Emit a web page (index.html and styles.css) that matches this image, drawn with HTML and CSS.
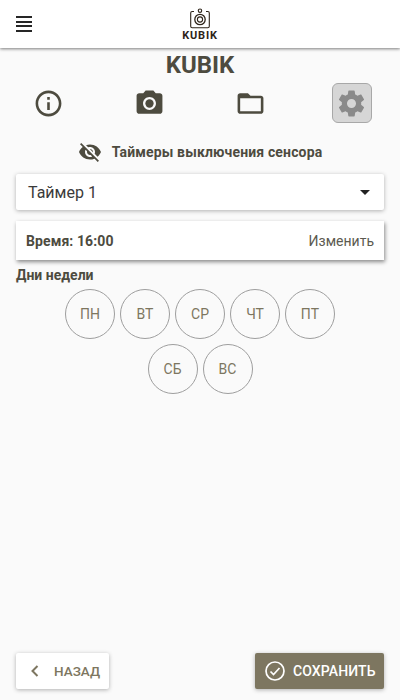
FILE: index.html
```html
<!DOCTYPE html>
<html lang="ru">
<head>
    <title>KUBIK</title>
    <meta charset="UTF-8">
    <meta name="viewport" content="width=device-width, initial-scale=1.0">
    <link rel="stylesheet" href="styles.css">
</head>
<body>
    <div class="header">
        <div class="menu-button">
            <span></span><span></span><span></span><span></span>
        </div>
        <div class="logo">
            <svg viewBox="0 0 20 21" class="logo-icon">
                <path d="M4 3.5H2.2Q.7 3.5.7 5v13.3q0 1.5 1.5 1.5h15.6q1.5 0 1.5-1.5V5q0-1.500-1.500-1.500H16" fill="none" stroke="#2e2419" stroke-width="1.1"/>
                <circle cx="10" cy="11.500" r="5.200" fill="none" stroke="#2e2419" stroke-width="1.300"/>
                <circle cx="10" cy="11.500" r="2.600" fill="none" stroke="#2e2419" stroke-width="1.100"/>
                <circle cx="10" cy="2.700" r="1.700" fill="none" stroke="#2e2419" stroke-width="1.100"/>
            </svg>
            <div class="logo-text">KUBIK</div>
        </div>
    </div>

    <div class="content">
        <div class="title">KUBIK</div>

        <div class="tabs">
            <div class="tab">
                <svg viewBox="0 0 24 24" class="tab-icon"><path d="M11 7h2v2h-2zm0 4h2v6h-2zm1-9C6.480 2 2 6.480 2 12s4.480 10 10 10 10-4.480 10-10S17.520 2 12 2zm0 18c-4.410 0-8-3.590-8-8s3.590-8 8-8 8 3.590 8 8-3.590 8-8 8z"/></svg>
            </div>
            <div class="tab">
                <svg viewBox="0 0 24 24" class="tab-icon"><circle cx="12" cy="12" r="3.200"/><path d="M9 2L7.170 4H4c-1.100 0-2 .9-2 2v12c0 1.100.9 2 2 2h16c1.100 0 2-.9 2-2V6c0-1.100-.9-2-2-2h-3.170L15 2H9zm3 15c-2.760 0-5-2.240-5-5s2.240-5 5-5 5 2.240 5 5-2.240 5-5 5z"/></svg>
            </div>
            <div class="tab">
                <svg viewBox="0 0 24 24" class="tab-icon"><path d="M20 6h-8l-2-2H4c-1.100 0-1.990.9-1.990 2L2 18c0 1.100.9 2 2 2h16c1.100 0 2-.9 2-2V8c0-1.100-.9-2-2-2zm0 12H4V8h16v10z"/></svg>
            </div>
            <div class="tab active">
                <svg viewBox="0 0 24 24" class="tab-icon"><path d="M19.430 12.980c.04-.32.07-.64.07-.98s-.03-.66-.07-.98l2.110-1.650c.19-.15.24-.42.12-.64l-2-3.460c-.12-.22-.39-.3-.61-.22l-2.490 1c-.52-.4-1.080-.73-1.690-.98l-.38-2.650C14.460 2.180 14.250 2 14 2h-4c-.25 0-.46.18-.49.42l-.38 2.650c-.61.25-1.170.59-1.690.98l-2.490-1c-.23-.09-.49 0-.61.22l-2 3.460c-.13.22-.07.49.12.64l2.110 1.650c-.04.32-.07.65-.07.98s.03.66.07.98l-2.110 1.650c-.19.15-.24.42-.12.64l2 3.460c.12.22.39.3.61.22l2.490-1c.52.4 1.080.73 1.690.98l.38 2.650c.03.24.24.42.49.42h4c.25 0 .46-.18.49-.42l.38-2.650c.61-.25 1.170-.59 1.690-.98l2.490 1c.23.09.49 0 .61-.22l2-3.460c.12-.22.07-.49-.12-.64l-2.110-1.650zM12 15.500c-1.930 0-3.500-1.570-3.500-3.500s1.570-3.500 3.500-3.500 3.500 1.570 3.500 3.500-1.570 3.500-3.500 3.500z"/></svg>
            </div>
        </div>

        <div class="section-title">
            <svg viewBox="0 0 24 24" class="section-icon"><path d="M12 7c2.760 0 5 2.240 5 5 0 .65-.13 1.260-.36 1.830l2.920 2.920c1.510-1.260 2.700-2.890 3.430-4.750-1.730-4.390-6-7.500-11-7.500-1.400 0-2.740.25-3.980.7l2.160 2.160C10.740 7.130 11.350 7 12 7zM2 4.270l2.280 2.280.46.46C3.080 8.300 1.780 10.020 1 12c1.730 4.390 6 7.500 11 7.500 1.550 0 3.030-.3 4.380-.84l.42.42L19.730 22 21 20.730 3.270 3 2 4.270zM7.530 9.800l1.550 1.550c-.05.21-.08.43-.08.65 0 1.660 1.340 3 3 3 .22 0 .44-.03.65-.08l1.550 1.550c-.67.33-1.410.53-2.200.53-2.760 0-5-2.240-5-5 0-.79.2-1.530.53-2.200zm4.310-.78l3.150 3.150.02-.16c0-1.660-1.340-3-3-3l-.17.01z"/></svg>
            <span>Таймеры выключения сенсора</span>
        </div>

        <div class="select">
            <span>Таймер 1</span>
            <span class="select-arrow"></span>
        </div>

        <div class="time-card">
            <span class="time-value">Время: 16:00</span>
            <span class="time-edit">Изменить</span>
        </div>

        <div class="days-label">Дни недели</div>
        <div class="days">
            <div class="day">ПН</div>
            <div class="day">ВТ</div>
            <div class="day">СР</div>
            <div class="day">ЧТ</div>
            <div class="day">ПТ</div>
            <div class="day">СБ</div>
            <div class="day">ВС</div>
        </div>

        <div class="footer">
            <div class="btn btn-back">
                <svg viewBox="0 0 10 14" class="back-icon"><path d="M7.500 2L2.500 7l5 5" fill="none" stroke="#7d7660" stroke-width="2"/></svg>
                <span>НАЗАД</span>
            </div>
            <div class="btn btn-save">
                <svg viewBox="0 0 20 20" class="save-icon">
                    <circle cx="10" cy="10" r="9" fill="none" stroke="#ffffff" stroke-width="1.700"/>
                    <path d="M5.500 10.500l3 3 6-6.500" fill="none" stroke="#ffffff" stroke-width="1.700"/>
                </svg>
                <span>СОХРАНИТЬ</span>
            </div>
        </div>
    </div>
</body>
</html>
```

FILE: styles.css
```css
html, body {
    height: 100%;
    margin: 0;
    font-family: Roboto, "Liberation Sans", sans-serif;
    background-color: #fafafa;
    color: #4d4b3f;
    overflow: hidden;
}
body {
    display: flex;
    flex-direction: column;
}
.header {
    background-color: #ffffff;
    height: 48px;
    flex-shrink: 0;
    display: flex;
    align-items: center;
    justify-content: center;
    position: relative;
    box-shadow: 0 1px 3px rgba(0, 0, 0, 0.5);
}
.menu-button {
    position: absolute;
    left: 16px;
    top: 16px;
    width: 16px;
    height: 16px;
    display: flex;
    flex-direction: column;
    justify-content: space-between;
}
.menu-button span {
    height: 2px;
    background-color: #262626;
}
.logo {
    display: flex;
    flex-direction: column;
    align-items: center;
    padding-top: 1px;
}
.logo-icon {
    width: 20px;
    height: 21px;
}
.logo-text {
    font-size: 11px;
    line-height: 12px;
    font-weight: 700;
    letter-spacing: 0.8px;
    color: #2e2419;
    margin-top: 1px;
}
.content {
    flex: 1;
    display: flex;
    flex-direction: column;
    padding: 0 16px 11px;
    min-height: 0;
}
.title {
    font-size: 24px;
    font-weight: 700;
    line-height: 28px;
    text-align: center;
    margin-top: 3px;
}
.tabs {
    display: flex;
    justify-content: space-between;
    margin: 4px 12px 0 12px;
}
.tab {
    width: 40px;
    height: 40px;
    box-sizing: border-box;
    border-radius: 6px;
    border: 1px solid transparent;
    display: flex;
    align-items: center;
    justify-content: center;
}
.tab.active {
    background-color: #d6d6d6;
    border-color: #a8a8a8;
}
.tab-icon {
    width: 31px;
    height: 31px;
    fill: #4d4b3f;
}
.tab.active .tab-icon {
    fill: #8a8a8a;
}
.section-title {
    display: flex;
    align-items: center;
    justify-content: center;
    gap: 10px;
    font-size: 14px;
    font-weight: 700;
    letter-spacing: 0.15px;
    margin-top: 16px;
    height: 26px;
}
.section-icon {
    width: 24px;
    height: 24px;
    fill: #4d4b3f;
}
.select {
    display: flex;
    align-items: center;
    justify-content: space-between;
    height: 36px;
    margin-top: 9px;
    padding: 0 14px 0 12px;
    background-color: #ffffff;
    border-radius: 2px;
    font-size: 16px;
    color: #3a3a3a;
    box-shadow: 0 1px 4px rgba(0, 0, 0, 0.3);
}
.select-arrow {
    width: 0;
    height: 0;
    border-left: 5px solid transparent;
    border-right: 5px solid transparent;
    border-top: 5px solid #222222;
}
.time-card {
    display: flex;
    align-items: center;
    justify-content: space-between;
    height: 39px;
    margin-top: 11px;
    padding: 0 10px;
    background-color: #ffffff;
    box-shadow: 1px 2px 4px rgba(0, 0, 0, 0.45);
}
.time-value {
    font-size: 14px;
    font-weight: 700;
    letter-spacing: 0.1px;
}
.time-edit {
    font-size: 14px;
    color: #5c5a50;
}
.days-label {
    font-size: 14px;
    font-weight: 700;
    line-height: 15px;
    margin-top: 8px;
}
.days {
    display: flex;
    flex-wrap: wrap;
    justify-content: center;
    gap: 5px;
    width: 275px;
    margin: 6px auto 0;
}
.day {
    width: 50px;
    height: 50px;
    box-sizing: border-box;
    border: 1px solid #9e9e9e;
    border-radius: 50%;
    display: flex;
    align-items: center;
    justify-content: center;
    font-size: 14px;
    color: #7d7660;
}
.footer {
    margin-top: auto;
    display: flex;
    justify-content: space-between;
}
.btn {
    height: 36px;
    display: flex;
    align-items: center;
    border-radius: 2px;
    font-size: 14px;
    font-weight: 500;
    box-shadow: 0 1px 4px rgba(0, 0, 0, 0.3);
}
.btn-back {
    width: 93px;
    padding-left: 14px;
    box-sizing: border-box;
    gap: 14px;
    background-color: #ffffff;
    color: #7d7660;
    font-size: 13.5px;
}
.back-icon {
    width: 10px;
    height: 14px;
}
.btn-save {
    width: 129px;
    padding-left: 10px;
    box-sizing: border-box;
    gap: 8px;
    background-color: #7d7660;
    color: #ffffff;
    letter-spacing: 0.1px;
}
.save-icon {
    width: 20px;
    height: 20px;
}
```
